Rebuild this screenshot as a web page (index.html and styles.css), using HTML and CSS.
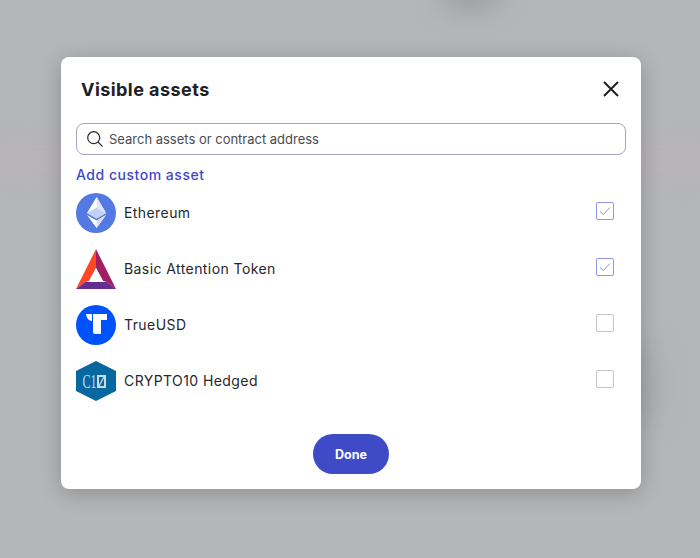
FILE: index.html
```html
<!DOCTYPE html>
<html lang="en">
<head>
<meta charset="UTF-8" />
<meta name="viewport" content="width=device-width, initial-scale=1" />
<title>Visible assets</title>
<link rel="stylesheet" href="styles.css">
</head>
<body>

<!-- blurred page behind the dialog -->
<div class="backdrop-blob blob-top"></div>
<div class="backdrop-blob blob-band"></div>
<div class="backdrop-blob blob-right"></div>

<div class="overlay">
  <div class="modal" role="dialog" aria-labelledby="modalTitle">
    <div class="modal-header">
      <h2 id="modalTitle">Visible assets</h2>
      <button class="close-btn" aria-label="Close">
        <svg width="16" height="16" viewBox="0 0 16 16" fill="none" stroke="#1f2023" stroke-width="2">
          <path d="M1 1L15 15M15 1L1 15" />
        </svg>
      </button>
    </div>

    <label class="search">
      <svg width="18" height="18" viewBox="0 0 18 18" fill="none" stroke="#2b2c30" stroke-width="1.2">
        <circle cx="7.7" cy="7.7" r="6" />
        <path d="M12 12L16.6 16.6" />
      </svg>
      <input type="text" placeholder="Search assets or contract address" />
    </label>

    <a class="add-link" href="#">Add custom asset</a>

    <ul class="asset-list">
      <li class="asset">
        <svg class="asset-icon" viewBox="0 0 40 40">
          <circle cx="20" cy="20" r="20" fill="#5479e2" />
          <path d="M20.6 4L11 20L20.6 25.5L30 20Z" fill="#fff" />
          <path d="M20.6 14.5L11 20L20.6 25.5L30 20Z" fill="#c5d0f5" />
          <path d="M20.6 4L30 20L20.6 14.5Z" fill="#dfe5fa" />
          <path d="M20.6 27.5L11 22L20.6 35L30 22Z" fill="#fff" />
          <path d="M20.6 27.5L30 22L20.6 35Z" fill="#d5ddf8" />
        </svg>
        <span class="asset-name">Ethereum</span>
        <span class="checkbox checked">
          <svg width="14" height="14" viewBox="0 0 14 14" fill="none" stroke="#8b93e0" stroke-width="1">
            <path d="M2 7.5L5.3 10.5L12 3.5" />
          </svg>
        </span>
      </li>
      <li class="asset">
        <svg class="asset-icon" viewBox="0 0 40 40">
          <path d="M20 0L20 19L13 32L9 33L0 40Z" fill="#ff4724" />
          <path d="M20 0L40 40L31 33L27 32L20 19Z" fill="#9e1f63" />
          <path d="M20 19L13 32H27Z" fill="#fff" />
          <path d="M9 33H31L40 40H0Z" fill="#662d91" />
        </svg>
        <span class="asset-name">Basic Attention Token</span>
        <span class="checkbox checked">
          <svg width="14" height="14" viewBox="0 0 14 14" fill="none" stroke="#8b93e0" stroke-width="1">
            <path d="M2 7.5L5.3 10.5L12 3.5" />
          </svg>
        </span>
      </li>
      <li class="asset">
        <svg class="asset-icon" viewBox="0 0 40 40">
          <circle cx="20" cy="20" r="20" fill="#0052ff" />
          <path d="M10 9H16V16Q11 16 10 9Z" fill="#fff" />
          <path d="M17 9H31V15H25V29H19Q17 29 17 27Z" fill="#fff" />
        </svg>
        <span class="asset-name">TrueUSD</span>
        <span class="checkbox"></span>
      </li>
      <li class="asset">
        <svg class="asset-icon" viewBox="0 0 40 40">
          <path d="M20 0L40 10V30L20 40L0 30V10Z" fill="#07689f" />
          <text class="c10-text" x="6.5" y="27" textLength="14" lengthAdjust="spacingAndGlyphs">C1</text>
          <rect x="21" y="14" width="9" height="13" fill="#c6dbe8" />
          <rect x="23" y="16" width="5" height="9" fill="#07689f" />
          <path d="M23 25L28 16" stroke="#c6dbe8" stroke-width="1.3" />
        </svg>
        <span class="asset-name">CRYPTO10 Hedged</span>
        <span class="checkbox"></span>
      </li>
    </ul>

    <div class="modal-footer">
      <button class="done-btn">Done</button>
    </div>
  </div>
</div>

</body>
</html>
```
FILE: styles.css
```css
html, body {
  height: 100%;
}
body {
  margin: 0;
  overflow: hidden;
  background: #b5b6b8;
  font-family: "Inter", "Liberation Sans", sans-serif;
  color: #1f2023;
}
/* blurred background page */
.backdrop-blob {
  position: absolute;
  filter: blur(14px);
}
.blob-top {
  left: 440px;
  top: -22px;
  width: 60px;
  height: 30px;
  border-radius: 50%;
  background: #97989a;
}
.blob-band {
  left: 0;
  top: 150px;
  width: 700px;
  height: 24px;
  background: #bab3b7;
}
.blob-right {
  left: 610px;
  top: 340px;
  width: 50px;
  height: 90px;
  border-radius: 50%;
  background: #a9aaac;
}
.overlay {
  position: relative;
  display: flex;
  justify-content: center;
  align-items: flex-start;
  padding: 57px 0 0 2px;
}
.modal {
  width: 580px;
  height: 432px;
  box-sizing: border-box;
  display: flex;
  flex-direction: column;
  padding: 16px 15px 15px;
  background: #fff;
  border-radius: 8px;
  box-shadow: 0 4px 22px rgba(0, 0, 0, 0.22);
}
.modal-header {
  display: flex;
  justify-content: space-between;
  align-items: center;
  height: 32px;
  padding: 0 7px 0 5px;
}
.modal-header h2 {
  margin: 0;
  font-size: 18px;
  font-weight: 700;
  letter-spacing: 0.45px;
}
.close-btn {
  display: flex;
  padding: 0;
  border: 0;
  background: none;
}
/* search */
.search {
  display: flex;
  align-items: center;
  gap: 4px;
  height: 32px;
  margin-top: 18px;
  padding: 0 9px;
  box-sizing: border-box;
  border: 1px solid #a4a5bd;
  border-radius: 8px;
}
.search input {
  flex: 1;
  border: 0;
  outline: 0;
  padding: 0 0 1px 1px;
  font-family: inherit;
  font-size: 13px;
  letter-spacing: -0.01px;
}
.search input::placeholder {
  color: #4a4b50;
  opacity: 1;
}
.add-link {
  display: block;
  margin-top: 11px;
  font-size: 14px;
  font-weight: 500;
  line-height: 18px;
  color: #3f48c8;
  text-decoration: none;
  letter-spacing: 0.52px;
}
/* asset rows */
.asset-list {
  display: flex;
  flex-direction: column;
  gap: 16px;
  margin: 9px 0 0;
  padding: 0;
  list-style: none;
}
.asset {
  display: flex;
  align-items: center;
  height: 40px;
  padding-right: 12px;
}
.asset-icon {
  width: 40px;
  height: 40px;
  flex: none;
}
.asset-name {
  flex: 1;
  margin: 0 0 1px 8px;
  font-size: 14px;
  letter-spacing: 0.42px;
  color: #26272b;
}
.checkbox {
  display: flex;
  align-items: center;
  justify-content: center;
  width: 18px;
  height: 18px;
  margin-top: -4px;
  box-sizing: border-box;
  border: 1px solid #c4c5cc;
  border-radius: 2px;
}
.checkbox.checked {
  border-color: #8e96e6;
}
.c10-text {
  font-family: "Liberation Serif", serif;
  font-size: 19px;
  fill: #c6dbe8;
}
.modal-footer {
  margin-top: auto;
  display: flex;
  justify-content: center;
}
.done-btn {
  width: 76px;
  height: 40px;
  border: 0;
  border-radius: 20px;
  background: #3f4ac7;
  color: #fff;
  font-family: inherit;
  font-size: 12.5px;
  font-weight: 700;
}
```
